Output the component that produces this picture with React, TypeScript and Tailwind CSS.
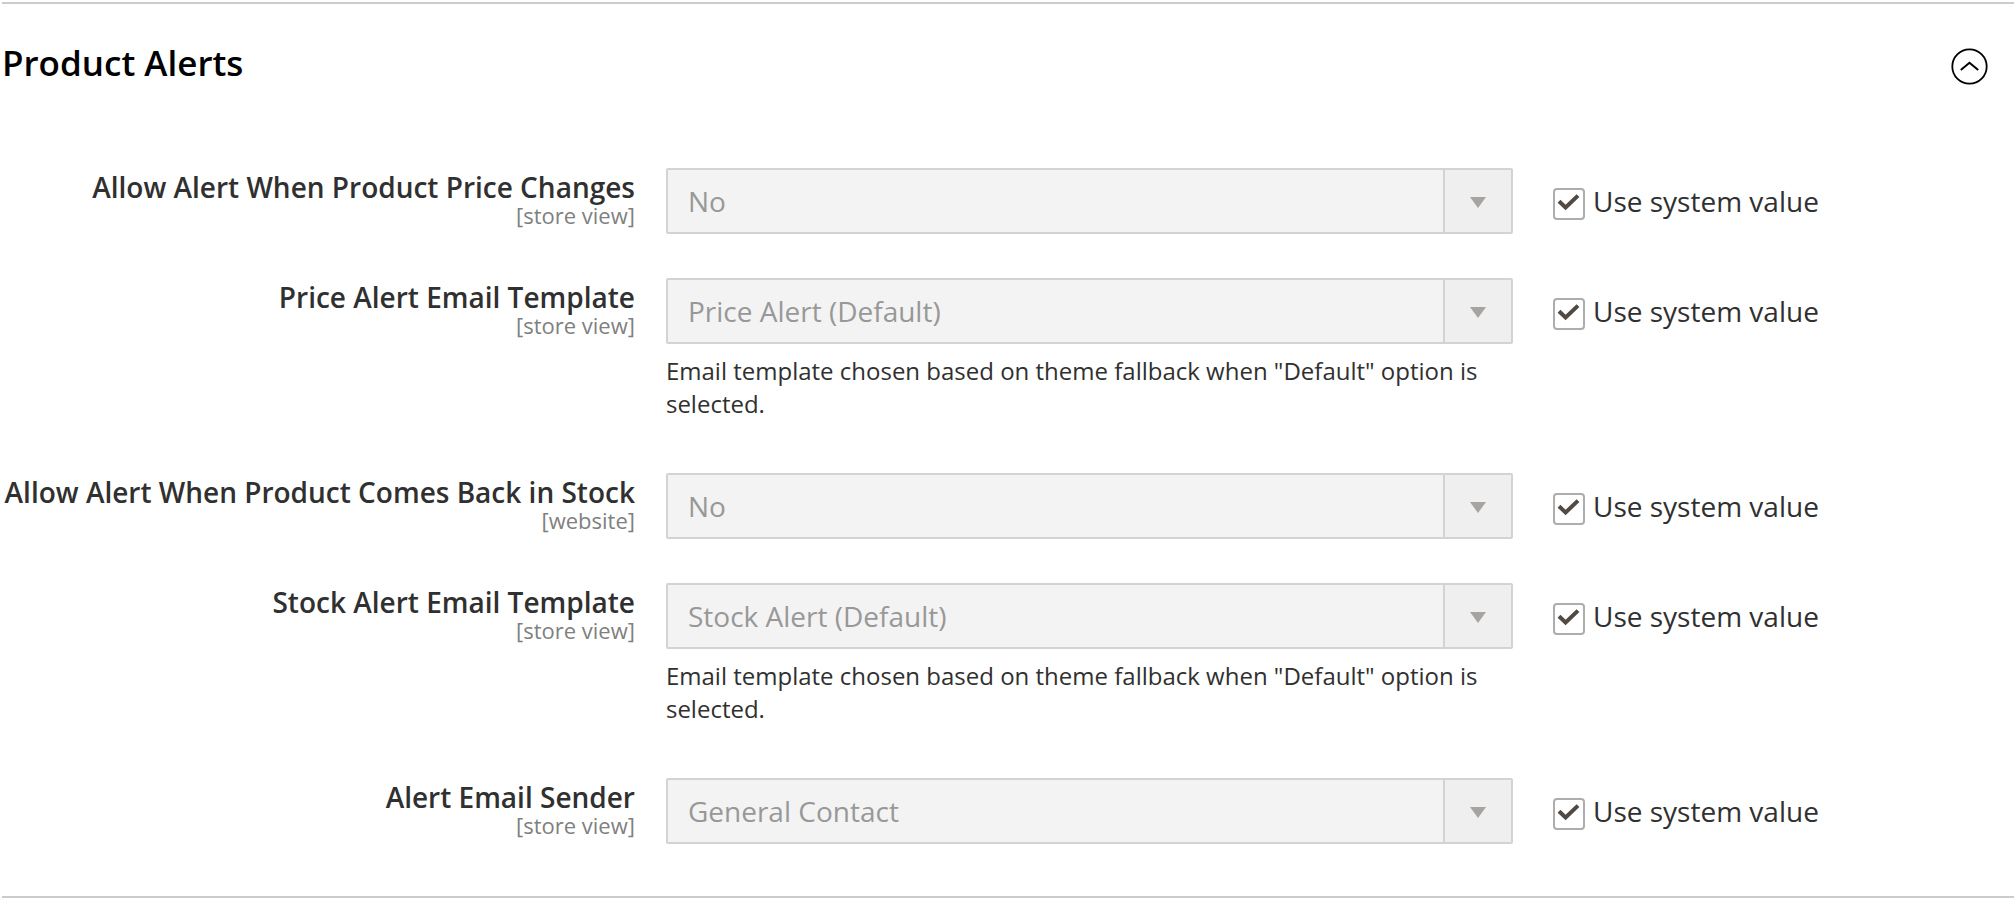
import { useId, useState } from "react";

type Field = {
  label: string;
  scope: string;
  options: string[];
  note?: string;
};

const TEMPLATE_NOTE =
  'Email template chosen based on theme fallback when "Default" option is selected.';

const FIELDS: Field[] = [
  { label: "Allow Alert When Product Price Changes", scope: "[store view]", options: ["No", "Yes"] },
  {
    label: "Price Alert Email Template",
    scope: "[store view]",
    options: ["Price Alert (Default)"],
    note: TEMPLATE_NOTE,
  },
  { label: "Allow Alert When Product Comes Back in Stock", scope: "[website]", options: ["No", "Yes"] },
  {
    label: "Stock Alert Email Template",
    scope: "[store view]",
    options: ["Stock Alert (Default)"],
    note: TEMPLATE_NOTE,
  },
  { label: "Alert Email Sender", scope: "[store view]", options: ["General Contact"] },
];

function FieldRow({ label, scope, options, note }: Field) {
  const id = useId();
  const [inherit, setInherit] = useState(true);

  return (
    <div className="grid grid-cols-[33%_42.1%_1fr] items-start">
      <label htmlFor={id} className="flex flex-col items-end pr-[31px] text-right">
        <span className="whitespace-nowrap text-[28px] font-semibold leading-[38px]">{label}</span>
        <span className="text-[22px] leading-[18px] text-[#808080]">{scope}</span>
      </label>

      <div>
        <div className="relative">
          <select
            id={id}
            disabled={inherit}
            className="block h-[66px] w-full appearance-none rounded-xs border-2 border-[#adadad] bg-white pl-5 pr-20 text-[28px] text-[#303030] disabled:border-[#d3d3d3] disabled:bg-[#f3f3f3] disabled:text-[#989898] disabled:opacity-100"
          >
            {options.map((option) => (
              <option key={option}>{option}</option>
            ))}
          </select>
          <span className="pointer-events-none absolute inset-y-0.5 right-0.5 flex w-[68px] items-center justify-center border-l-2 border-[#d3d3d3] bg-[#efefef] pt-0.5">
            <svg width="16" height="11" viewBox="0 0 16 11" fill="#a6a3a0" aria-hidden="true">
              <path d="M0 0h16L8 11z" />
            </svg>
          </span>
        </div>
        {note && <p className="pb-[9px] pt-[10px] text-2xl leading-[33px]">{note}</p>}
      </div>

      <div className="flex h-[66px] items-center pl-10">
        <label className="flex items-center gap-2 text-[28px] leading-[38px]">
          <span className="relative mt-1.5 size-8">
            <input
              type="checkbox"
              checked={inherit}
              onChange={(event) => setInherit(event.target.checked)}
              className="peer block size-8 appearance-none rounded-sm border-2 border-[#adadad] bg-white"
            />
            <svg
              className="pointer-events-none invisible absolute inset-0 peer-checked:visible"
              width="32"
              height="32"
              viewBox="0 0 32 32"
              fill="none"
              stroke="#514943"
              strokeWidth="4"
              aria-hidden="true"
            >
              <path d="M6 13.2l6.6 6.3L25 7.6" />
            </svg>
          </span>
          Use system value
        </label>
      </div>
    </div>
  );
}

export default function App() {
  const [open, setOpen] = useState(true);

  return (
    <main className="bg-white pl-0.5 pt-0.5 font-['Open_Sans',sans-serif] text-[#303030]">
      <section className="border-y-2 border-[#cccccc]">
        <h2>
          <button
            type="button"
            aria-expanded={open}
            onClick={() => setOpen(!open)}
            className="flex w-full items-center justify-between pb-[33px] pr-[26px] pt-[35px] text-left text-[35px] font-semibold leading-[48px] text-black"
          >
            Product Alerts
            <svg
              className={open ? "mt-1.5" : "mt-1.5 rotate-180"}
              width="37"
              height="37"
              viewBox="0 0 37 37"
              fill="none"
              stroke="#000000"
              aria-hidden="true"
            >
              <circle cx="18.5" cy="18.5" r="17.2" strokeWidth="1.8" />
              <path d="M9.8 22l8.7-7.2 8.7 7.2" strokeWidth="2" />
            </svg>
          </button>
        </h2>
        {open && (
          <div className="flex flex-col gap-11 pb-[52px] pt-12">
            {FIELDS.map((field) => (
              <FieldRow key={field.label} {...field} />
            ))}
          </div>
        )}
      </section>
    </main>
  );
}
